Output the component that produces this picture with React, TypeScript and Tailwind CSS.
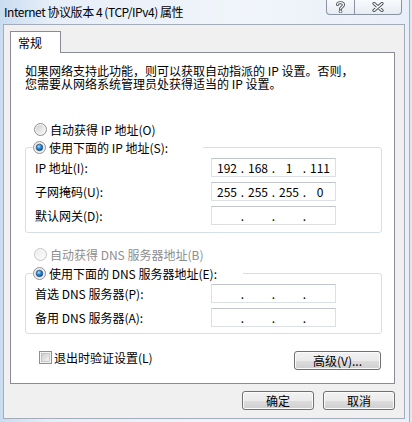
import React from "react";

const body = "font-['Noto_Sans_CJK_SC','Noto_Sans',sans-serif] text-[12px] leading-[13px] text-black";

function Radio({ checked = false, disabled = false }: { checked?: boolean; disabled?: boolean }) {
  const ring = disabled ? "#c4c4c4" : "#8e8f8f";
  return (
    <svg width="13" height="13" viewBox="0 0 13 13" className="shrink-0">
      <defs>
        <linearGradient id={`rf${disabled ? "d" : "n"}`} x1="0" y1="0" x2="1" y2="1">
          <stop offset="0" stopColor={disabled ? "#ececec" : "#cfcfcf"} />
          <stop offset="1" stopColor={disabled ? "#fbfbfb" : "#fafafa"} />
        </linearGradient>
        <radialGradient id="rdot" cx="0.4" cy="0.35" r="0.7">
          <stop offset="0" stopColor="#a9e2ff" />
          <stop offset="0.45" stopColor="#2c8bd8" />
          <stop offset="1" stopColor="#0b3e78" />
        </radialGradient>
      </defs>
      <circle cx="6.5" cy="6.5" r="6" fill={disabled ? "#f7f7f7" : "#f4f4f4"} stroke={ring} strokeWidth="1" />
      <circle cx="6.5" cy="6.5" r="4.5" fill={`url(#rf${disabled ? "d" : "n"})`} />
      {checked && <circle cx="6.5" cy="6.5" r="3.3" fill="url(#rdot)" stroke="#1b4f86" strokeWidth="0.6" />}
    </svg>
  );
}

function Checkbox() {
  return (
    <svg width="13" height="13" viewBox="0 0 13 13" className="shrink-0">
      <defs>
        <linearGradient id="cbf" x1="0" y1="0" x2="1" y2="1">
          <stop offset="0" stopColor="#cbcbcb" />
          <stop offset="1" stopColor="#f6f6f6" />
        </linearGradient>
      </defs>
      <rect x="0.5" y="0.5" width="12" height="12" fill="#f4f4f4" stroke="#8e8f8f" />
      <rect x="2.5" y="2.5" width="8" height="8" fill="url(#cbf)" stroke="#b0b0b0" strokeWidth="0.6" />
    </svg>
  );
}

function IpBox({ parts }: { parts: string[] }) {
  return (
    <div className="flex h-[19px] w-[125px] items-center border border-[#dcdfe3] border-t-[#c2c5ca] bg-white pl-[3px]">
      {parts.map((p, i) => (
        <React.Fragment key={i}>
          <div className="w-[24px] text-center">{p}</div>
          {i < 3 && <div className="w-[7px] text-center">.</div>}
        </React.Fragment>
      ))}
    </div>
  );
}

function Row({ label, parts }: { label: string; parts: string[] }) {
  return (
    <div className="flex h-[19px] items-center">
      <div className="w-[176px] whitespace-nowrap">{label}</div>
      <IpBox parts={parts} />
    </div>
  );
}

function Btn({ children, w }: { children: React.ReactNode; w: string }) {
  return (
    <div
      className={`${w} flex h-[19px] items-center justify-center rounded-[3px] border border-[#707070] bg-[linear-gradient(#f2f2f2_0%,#ebebeb_50%,#dddddd_51%,#cfcfcf_100%)] shadow-[inset_0_0_0_1px_#fbfbfb]`}
    >
      {children}
    </div>
  );
}

export default function App() {
  return (
    <div className="flex h-[422px] w-[412px] overflow-hidden bg-[linear-gradient(90deg,#c9dcf0_0%,#e6eef8_12%,#f1f5fa_60%,#e8eff8_100%)]">
      <div className="flex w-[409px] flex-col">
        {/* title bar */}
        <div className="flex h-[24px] items-start justify-between">
          <div className="whitespace-nowrap pl-[4px] pt-[4px] font-['Noto_Sans_CJK_SC','Noto_Sans',sans-serif] text-[12px] leading-[16px] tracking-[-0.45px] text-black">
            Internet 协议版本 4 (TCP/IPv4) 属性
          </div>
          <div className="mr-[7px] flex h-[15px] overflow-hidden rounded-b-[4px] border border-t-0 border-[#8b93a0] bg-[linear-gradient(#f8fafc,#e6ecf3)]">
            <div className="flex w-[28px] items-center justify-center border-r border-[#8b93a0]">
              <svg width="9" height="12" viewBox="0 0 9 12">
                <path d="M1.5 3.5 C1.5 1 7.5 1 7.5 3.8 C7.5 6 4.5 5.8 4.5 8" fill="none" stroke="#4a4f57" strokeWidth="3" strokeLinecap="round" />
                <path d="M1.5 3.5 C1.5 1 7.5 1 7.5 3.8 C7.5 6 4.5 5.8 4.5 8" fill="none" stroke="#ffffff" strokeWidth="1.2" strokeLinecap="round" />
                <circle cx="4.5" cy="10.5" r="1.4" fill="#ffffff" stroke="#4a4f57" strokeWidth="0.9" />
              </svg>
            </div>
            <div className="flex w-[46px] items-center justify-center">
              <svg width="12" height="10" viewBox="0 0 12 10">
                <path d="M2 1.5 L10 8.5 M10 1.5 L2 8.5" stroke="#4a4f57" strokeWidth="3.2" strokeLinecap="round" />
                <path d="M2 1.5 L10 8.5 M10 1.5 L2 8.5" stroke="#ffffff" strokeWidth="1.4" strokeLinecap="round" />
              </svg>
            </div>
          </div>
        </div>
        {/* body */}
        <div className="flex">
          <div className="w-[3px]" />
          <div className={`${body} h-[395px] w-[402px] border border-[#a3acb8] bg-[#f0f0f0] pl-[6px] pt-[6px]`}>
            <div className="relative z-10 -mb-px flex h-[22px] w-[51px] items-center border border-b-0 border-[#898c95] bg-white pl-[7px] pb-[1px]">
              常规
            </div>
            <div className="flex h-[332px] w-[385px] flex-col border border-[#898c95] bg-white">
              <div className="ml-[14px] mt-[11px] flex flex-col whitespace-nowrap">
                <div className="h-[13px]">如果网络支持此功能，则可以获取自动指派的 IP 设置。否则，</div>
                <div className="h-[13px]">您需要从网络系统管理员处获得适当的 IP 设置。</div>
              </div>
              <div className="ml-[23px] mt-[31px] flex h-[16px] items-center gap-[3px]">
                <Radio />
                <span>自动获得 IP 地址(O)</span>
              </div>
              <div className="relative ml-[14px] mt-[10px] flex h-[86px] w-[357px] flex-col gap-[5px] rounded-[3px] border border-[#d5dfe5] pl-[9px] pt-[10px]">
                <div className="absolute left-[7px] top-[-9px] flex h-[16px] w-[170px] items-center gap-[3px] bg-white">
                  <Radio checked />
                  <span>使用下面的 IP 地址(S):</span>
                </div>
                <Row label="IP 地址(I):" parts={["192", "168", "1", "111"]} />
                <Row label="子网掩码(U):" parts={["255", "255", "255", "0"]} />
                <Row label="默认网关(D):" parts={["", "", "", ""]} />
              </div>
              <div className="ml-[23px] mt-[13px] flex h-[16px] items-center gap-[3px] text-[#8d8d8d]">
                <Radio disabled />
                <span>自动获得 DNS 服务器地址(B)</span>
              </div>
              <div className="relative ml-[14px] mt-[11px] flex h-[61px] w-[357px] flex-col gap-[5px] rounded-[3px] border border-[#d5dfe5] pl-[9px] pt-[10px]">
                <div className="absolute left-[7px] top-[-9px] flex h-[16px] w-[210px] items-center gap-[3px] bg-white">
                  <Radio checked />
                  <span>使用下面的 DNS 服务器地址(E):</span>
                </div>
                <Row label="首选 DNS 服务器(P):" parts={["", "", "", ""]} />
                <Row label="备用 DNS 服务器(A):" parts={["", "", "", ""]} />
              </div>
              <div className="ml-[28px] mr-[13px] mt-[17px] flex items-start justify-between">
                <div className="flex h-[13px] items-center gap-[2px]">
                  <Checkbox />
                  <span>退出时验证设置(L)</span>
                </div>
                <Btn w="w-[87px]">高级(V)...</Btn>
              </div>
            </div>
            <div className="mt-[7px] flex w-[385px] justify-end gap-[9px]">
              <Btn w="w-[72px]">确定</Btn>
              <Btn w="w-[72px]">取消</Btn>
            </div>
          </div>
          <div className="w-[4px]" />
        </div>
      </div>
      <div className="w-[1px] bg-[#a4afbd]" />
      <div className="w-[2px] bg-[#dfe8f2]" />
    </div>
  );
}
